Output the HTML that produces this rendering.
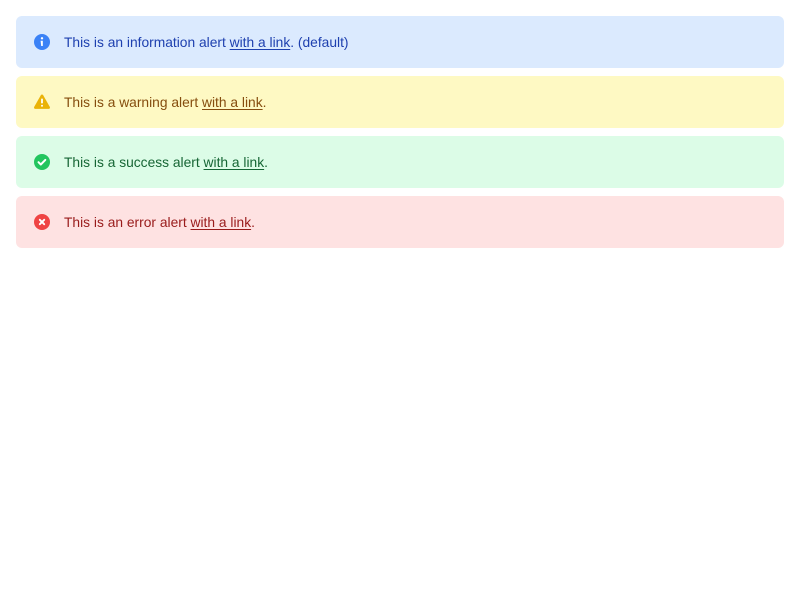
<!DOCTYPE html>
<html><head><meta charset="utf-8"><style>
html,body{margin:0;padding:0;background:#fff;width:800px;height:600px;overflow:hidden}
body{font-family:"Liberation Sans",sans-serif;font-size:13.8px}
.a{position:absolute;left:16px;width:768px;height:52px;border-radius:6px}
.a svg{position:absolute;left:16px;top:16px;width:20px;height:20px}
.a span{position:absolute;left:48px;top:1px;line-height:52px}
.a u{text-underline-offset:2px}
</style></head><body>
<div class="a" style="top:16px;background:#dbeafe;color:#1e40af">
<svg viewBox="0 0 20 20"><circle cx="10" cy="10" r="8" fill="#3b82f6"/><circle cx="10" cy="6.3" r="1.2" fill="#fff"/><path d="M8.6 8.8h2.2v5.2h-1.6z" fill="#fff"/></svg>
<span>This is an information alert <u>with a link</u>. (default)</span></div>
<div class="a" style="top:76px;background:#fef9c3;color:#854d0e">
<svg viewBox="0 0 20 20"><path d="M10 2.5c.5 0 .9.3 1.2.8l6.6 11.6c.5.9-.1 2-1.2 2H3.4c-1.1 0-1.7-1.1-1.2-2L8.8 3.3c.3-.5.7-.8 1.2-.8z" fill="#eab308"/><rect x="9.1" y="6.5" width="1.8" height="5" rx=".9" fill="#fff"/><circle cx="10" cy="13.8" r="1" fill="#fff"/></svg>
<span>This is a warning alert <u>with a link</u>.</span></div>
<div class="a" style="top:136px;background:#dcfce7;color:#166534">
<svg viewBox="0 0 20 20"><circle cx="10" cy="10" r="8" fill="#22c55e"/><path d="M6.5 10.2l2.3 2.3 4.5-4.6" stroke="#fff" stroke-width="2" fill="none" stroke-linecap="round" stroke-linejoin="round"/></svg>
<span>This is a success alert <u>with a link</u>.</span></div>
<div class="a" style="top:196px;background:#fee2e2;color:#991b1b">
<svg viewBox="0 0 20 20"><circle cx="10" cy="10" r="8" fill="#ef4444"/><path d="M7.8 7.8l4.4 4.4M12.2 7.8l-4.4 4.4" stroke="#fff" stroke-width="1.9" stroke-linecap="round"/></svg>
<span>This is an error alert <u>with a link</u>.</span></div>
</body></html>
